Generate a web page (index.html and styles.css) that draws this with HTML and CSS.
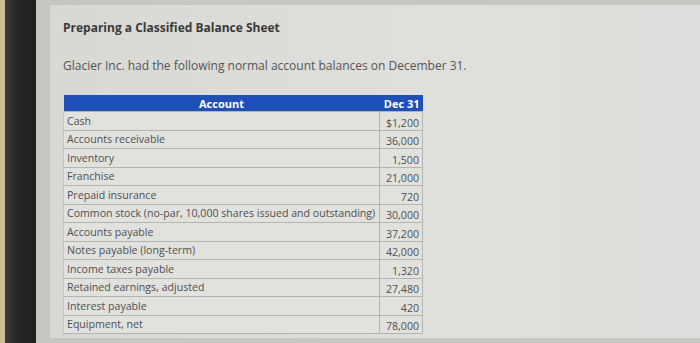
FILE: index.html
```html
<!DOCTYPE html>
<html lang="en">
<head>
  <meta charset="UTF-8">
  <meta name="viewport" content="width=device-width, initial-scale=1.0">
  <title>Preparing a Classified Balance Sheet</title>
  <link rel="stylesheet" href="styles.css">
</head>
<body>

<div class="frame">
  <div class="bezel"></div>
  <div class="screen">
    <div class="page">
      <h1>Preparing a Classified Balance Sheet</h1>
      <p class="intro">Glacier Inc. had the following normal account balances on December 31.</p>

      <table class="balances">
        <thead>
          <tr>
            <th class="acct">Account</th>
            <th class="amt">Dec 31</th>
          </tr>
        </thead>
        <tbody>
          <tr><td>Cash</td><td class="amt">$1,200</td></tr>
          <tr><td>Accounts receivable</td><td class="amt">36,000</td></tr>
          <tr><td>Inventory</td><td class="amt">1,500</td></tr>
          <tr><td>Franchise</td><td class="amt">21,000</td></tr>
          <tr><td>Prepaid insurance</td><td class="amt">720</td></tr>
          <tr><td>Common stock (no-par, 10,000 shares issued and outstanding)</td><td class="amt">30,000</td></tr>
          <tr><td>Accounts payable</td><td class="amt">37,200</td></tr>
          <tr><td>Notes payable (long-term)</td><td class="amt">42,000</td></tr>
          <tr><td>Income taxes payable</td><td class="amt">1,320</td></tr>
          <tr><td>Retained earnings, adjusted</td><td class="amt">27,480</td></tr>
          <tr><td>Interest payable</td><td class="amt">420</td></tr>
          <tr><td>Equipment, net</td><td class="amt">78,000</td></tr>
        </tbody>
      </table>
    </div>
  </div>
</div>

</body>
</html>
```

FILE: styles.css
```css
body {
  margin: 0;
  font-family: "Open Sans", "Liberation Sans", sans-serif;
  background-color: #cbbf9a;
}
.frame {
  display: flex;
  height: 343px;
  padding-left: 5px;
}
.bezel {
  width: 31px;
  background: linear-gradient(to right, #3a3a38, #262626 40%, #1f1f1f);
}
.screen {
  flex: 1;
  background-color: #c6c6c2;
  padding: 5px 0 5px 14px;
  display: flex;
}
.page {
  flex: 1;
  background: linear-gradient(to right, #d8d8d4, #dfdfdb 60%, #dddddb);
  padding: 14px 0 0 13px;
}
h1 {
  margin: 0;
  font-size: 12px;
  font-weight: 700;
  color: #3a3a3a;
  line-height: 17px;
}
.intro {
  margin: 22px 0 0;
  font-size: 12px;
  color: #555;
  line-height: 16px;
}
.balances {
  margin-top: 21px;
  border-collapse: collapse;
  font-size: 10.6px;
  color: #505050;
}
.balances th {
  background-color: #1f50b8;
  color: #fff;
  font-weight: 700;
  font-size: 11px;
  height: 16px;
  padding: 0 3px;
}
.balances th.acct {
  text-align: center;
  width: 310px;
}
.balances td {
  height: 17.5px;
  padding: 0 3px;
  border: 1px solid #b4b4b0;
  background-color: #e1e1dd;
  white-space: nowrap;
}
.balances td:first-child {
  border-left-color: #c6c6c2;
}
.balances .amt {
  text-align: right;
  width: 36px;
}
.balances td.amt {
  vertical-align: bottom;
}
```
